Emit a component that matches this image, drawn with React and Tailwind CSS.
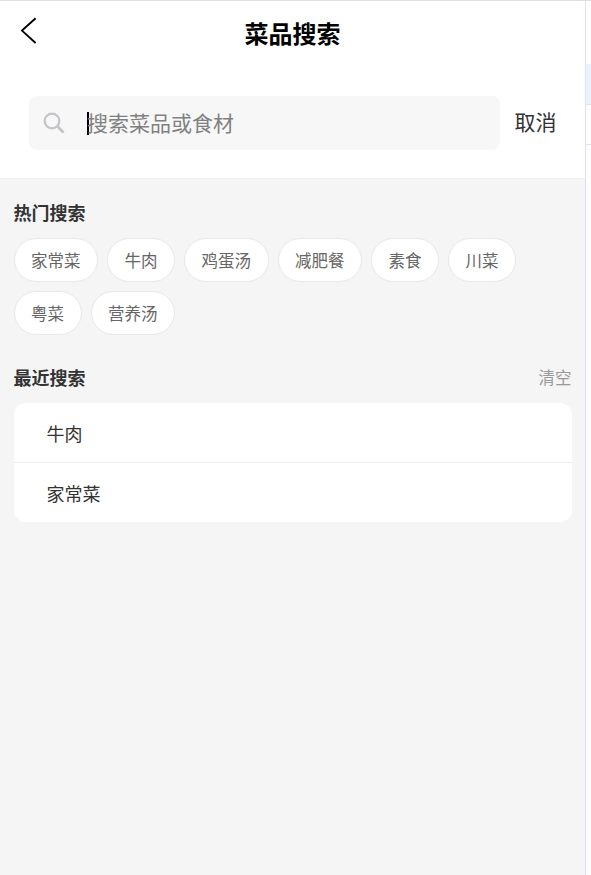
import { useState } from "react";

const hotKeywords = ["家常菜", "牛肉", "鸡蛋汤", "减肥餐", "素食", "川菜", "粤菜", "营养汤"];

const NavBar = () => (
    <header className="grid grid-cols-[60px_1fr_60px] h-[66px] items-center">
        <button className="pl-[20px] pb-[6px]">
            <svg width="18" height="28" viewBox="0 0 18 28" fill="none" stroke="#000" strokeWidth="1.9">
                <path d="M15.6 1.3L2 13.6L15.6 26" />
            </svg>
        </button>
        <h1 className="text-center text-[24px] leading-[36px] pb-[2px] font-bold text-black">菜品搜索</h1>
    </header>
);

const SearchBar = () => (
    <div className="flex items-center pl-[29px] pt-[29px] pb-[28px]">
        <div className="flex items-center w-[471px] h-[54px] rounded-lg bg-[#f7f7f7] pl-[14px]">
            <svg width="22" height="22" viewBox="0 0 22 22" fill="none" stroke="#c3c4c9" strokeWidth="2.2">
                <circle cx="9" cy="9" r="7.3" />
                <path d="M14.3 14.3L20.5 20.5" strokeWidth="2.8" />
            </svg>
            <span className="w-[2px] h-[23px] bg-black ml-[22px]" />
            <span className="text-[21px] leading-[30px] pb-[2px] text-[#808080] -ml-[2px]">搜索菜品或食材</span>
        </div>
        <button className="ml-[14.5px] pb-[4px] text-[21px] leading-[30px] text-[#333]">取消</button>
    </div>
);

const App = () => {
    const [history, setHistory] = useState(["牛肉", "家常菜"]);

    return (
        <div className="flex h-[875px] w-[591px] overflow-hidden border-t border-[#dedede] bg-white font-['Noto_Sans_CJK_SC','Noto_Sans',sans-serif]">
            <div className="flex flex-col w-[585px] shrink-0 bg-[#f5f5f5]">
                {/* Cabecera */}
                <div className="bg-white border-b border-[#f0f0f0] h-[178px]">
                    <NavBar />
                    <SearchBar />
                </div>

                {/* Búsquedas populares */}
                <section className="pl-[13.5px] pt-[20px]">
                    <h2 className="text-[18px] leading-[27px] font-bold text-[#333]">热门搜索</h2>
                    <div className="flex flex-wrap gap-[9px] mt-[12px]">
                        {hotKeywords.map((item) => (
                            <button
                                key={item}
                                className="h-[44px] px-[16.5px] rounded-[22px] border border-[#e8e8e8] bg-white text-[16.5px] leading-[24px] text-[#666]"
                            >
                                {item}
                            </button>
                        ))}
                    </div>
                </section>

                {/* Búsquedas recientes */}
                <section className="px-[13.5px] pt-[29px]">
                    <div className="flex justify-between items-center h-[27px]">
                        <h2 className="text-[18px] leading-[27px] font-bold text-[#333]">最近搜索</h2>
                        <button className="pb-[2px] text-[16.5px] leading-[24px] text-[#999]" onClick={() => setHistory([])}>
                            清空
                        </button>
                    </div>
                    <ul className="mt-[12px] rounded-xl bg-white divide-y divide-[#eeeeee]">
                        {history.map((item) => (
                            <li key={item} className="flex items-center h-[59.5px] pl-[33px] pt-[2px] text-[18px] leading-[27px] text-[#333]">
                                {item}
                            </li>
                        ))}
                    </ul>
                </section>
            </div>

            {/* Borde del panel contiguo */}
            <div className="flex-1 border-l border-[#dfe1f5] bg-[#fdfdff]">
                <div className="h-[63px]" />
                <div className="h-[41px] bg-[#eceffc] border-b border-[#dfe1f5]" />
                <div className="h-[40px] border-b border-[#dfe1f5]" />
            </div>
        </div>
    );
};

export default App;
